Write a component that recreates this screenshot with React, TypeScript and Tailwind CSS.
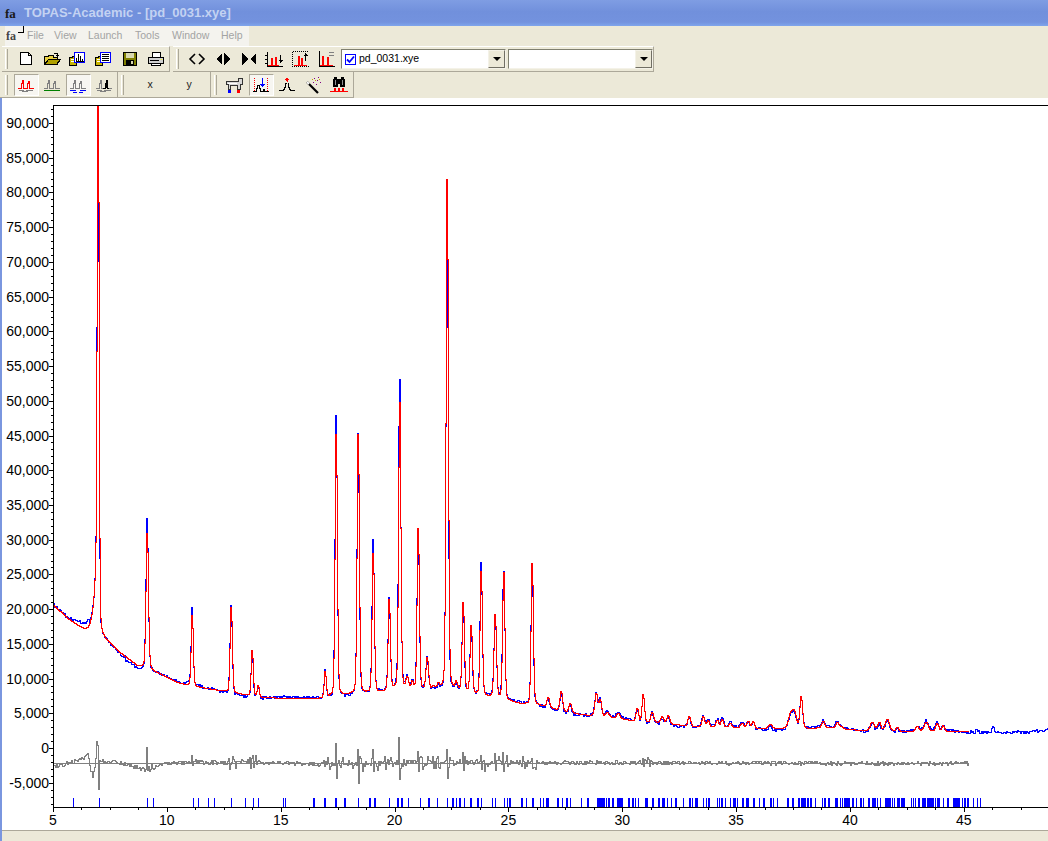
import type { ReactNode } from 'react';

// [x, red top, blue top, width] in screen pixels
const PEAKS: [number, number, number, number][] = [
  [98, 60, 65, 1], [147, 533, 518, 1.4], [192, 615, 610, 1.2], [231, 607, 604, 1.3], [252, 650, 648, 1.2],
  [258, 685, 686, 1.2], [325, 672, 670, 1.2], [336, 434, 414, 1.3], [358, 434, 434, 1.3], [373, 553, 539, 1.3],
  [389, 600, 600, 1.3], [399.5, 403, 380, 1.3], [407, 678, 678, 1.5], [412, 682, 682, 1.2], [418, 529, 530, 1.3],
  [427, 658, 658, 1.5], [433, 686, 686, 1.2], [438, 684, 684, 1.2], [447, 179, 221, 1.3], [456, 683, 683, 1.2],
  [463, 603, 603, 1.3], [471, 626, 626, 1.3], [481, 572, 564, 1.3], [495, 615, 616, 1.4], [503.5, 572, 572, 1.3],
  [532, 563, 564, 1.3], [548, 697, 697, 1.5], [561, 691, 691, 1.5], [570, 703, 703, 1.5], [596, 693, 693, 1.6],
  [600, 700, 700, 1.6], [607, 712, 712, 2], [618, 713, 713, 2], [637, 708, 708, 1.5], [643, 694, 694, 1.4],
  [652, 712, 712, 1.6], [662, 716, 716, 1.6], [668, 715, 715, 1.6], [689, 716, 716, 1.6], [703, 716, 716, 1.6],
  [708, 720, 720, 1.5], [717, 720, 720, 1.6], [722, 719, 719, 1.6], [730, 723, 723, 1.8], [742, 723, 723, 2],
  [748, 721, 721, 1.6], [753, 721, 721, 1.6], [770, 724, 724, 2], [790, 716, 716, 2.5], [794, 712, 712, 2.5],
  [801, 697, 697, 1.6], [823, 721, 721, 1.8], [837, 722, 722, 1.8], [841, 726, 726, 1.5], [872, 722, 722, 2.5],
  [879, 722, 722, 1.8], [887, 719, 719, 2.5], [897, 727, 727, 1.6], [917, 726, 726, 2], [926, 722, 722, 2.5],
  [937, 723, 723, 1.8], [943, 725, 725, 1.6], [977, 728, 728, 1.6], [993, 725, 725, 1.5], [1018, 730, 730, 2],
];

const BASE: [number, number][] = [
  [53, 604], [68, 618], [88, 632], [101, 635], [120, 652], [137, 665], [150, 669], [180, 683], [195, 686],
  [230, 692], [260, 697], [290, 698], [320, 698], [340, 695], [360, 693], [380, 692], [400, 688], [420, 690],
  [445, 688], [460, 690], [480, 695], [500, 698], [520, 703], [540, 705], [560, 710], [580, 714], [600, 716],
  [620, 718], [640, 722], [660, 722], [690, 726], [760, 728], [810, 728], [830, 727], [860, 730], [900, 731],
  [968, 731], [1000, 731], [1020, 733], [1048, 731],
];

const DIFF_BASE: [number, number][] = [
  [53, 767], [70, 762], [85, 757], [88, 754], [91, 770], [93, 775], [96, 760], [102, 761], [120, 762], [130, 765],
  [140, 767], [145, 770], [150, 767], [170, 763], [190, 762], [230, 762], [240, 760], [260, 762], [300, 763],
  [320, 764], [400, 762], [969, 763],
];

const SPIKES: [number, number, number][] = [
  [97, 741, 781], [98, 745, 789], [147, 747, 770], [192, 755, 765], [229, 758, 769], [250, 757, 768], [324, 760, 766],
  [336, 743, 778], [358, 749, 783], [373, 749, 771], [385, 756, 769], [399, 737, 779], [418, 751, 771], [433, 756, 768],
  [447, 749, 778], [463, 752, 770], [481, 755, 769], [495, 753, 770], [503, 752, 771], [532, 758, 768], [643, 758, 766],
];

// tick offsets as read from the crops, grouped by their left origin
const TICKS_A = [73, 99, 147, 153, 193, 198, 208, 214, 231, 245, 253, 258, 283, 285, 313, 314, 324, 335, 336, 344];
const TICKS_B = [
  113, 147, 162, 207, 232, 242, 264, 299, 325, 352, 382, 395, 408, 418, 433, 450, 470, 475, 482, 515, 525, 553, 560,
  568, 604, 618, 635, 660, 668, 678, 685, 710, 725, 738, 750, 783, 800, 830, 835, 840, 845, 850, 858, 865, 875, 880,
  890, 895, 900, 905, 925, 935, 945, 955, 975, 980, 995, 1015, 1030,
];
const TICKS_C = [
  7, 22, 32, 44, 70, 88, 95, 105, 112, 130, 137, 145, 170, 178, 183, 195, 210, 218, 225, 232, 245, 258, 262, 278, 298,
  310, 330, 340, 352, 380, 385, 395, 415, 418, 422, 426, 430, 435, 440, 450, 465, 485, 492, 505, 525, 532, 540, 545,
  552, 558, 565, 575, 588, 600, 608, 625, 635, 642, 652, 660, 675, 680, 685, 690, 695, 702, 710, 718, 722, 726, 730,
  752, 760, 765, 775, 785, 790, 795, 800, 806, 810, 815, 820, 825, 830, 835, 850, 862, 880, 885, 892, 898, 905, 912,
  922, 938, 950, 960,
];
const TICKS = [
  ...TICKS_A,
  ...TICKS_B.map((t) => Math.round(320 + t / 3)),
  ...TICKS_C.map((t) => Math.round(660 + t / 3)),
];

function interp(table: [number, number][], x: number) {
  for (let i = 1; i < table.length; i++) {
    if (x <= table[i][0]) {
      const [x0, y0] = table[i - 1];
      const [x1, y1] = table[i];
      return y0 + ((y1 - y0) * (x - x0)) / (x1 - x0);
    }
  }
  return table[table.length - 1][1];
}

function rng(seed: number) {
  let s = seed;
  return () => {
    s = (s * 1664525 + 1013904223) % 4294967296;
    return s / 4294967296;
  };
}

const profile = (d: number, w: number) => {
  const r = (d / w) * (d / w);
  return 0.82 * Math.exp(-0.693 * r) + 0.18 / (1 + r);
};

function curve(which: 'red' | 'blue', end: number) {
  const noise = rng(which === 'red' ? 7 : 19);
  let d = '';
  for (let x = 53; x <= end; x++) {
    let y = interp(BASE, x);
    if (x < 98) y -= 120 * Math.exp(-(98 - x) / 3);
    if (which === 'blue') {
      y += (noise() - 0.5) * 3 + 1.4 * Math.sin(x / 17);
      if (x > 70 && x < 90) y -= ((x - 70) / 20) * 6;
      if (x > 125 && x < 145) y += 1.5;
    }
    for (const [px, red, blue, w] of PEAKS) {
      if (Math.abs(x - px) > 24) continue;
      const x0 = which === 'red' ? px + 0.3 : px + 0.2;
      const top = which === 'red' ? red : blue;
      const h = interp(BASE, px) - top;
      y -= (h * profile(x - x0, w)) / profile(Math.round(x0) - x0, w);
    }
    y = Math.round(Math.max(106, y));
    d += x === 53 ? `M52.5 ${y}` : `H${x - 0.5}V${y}`;
  }
  return d;
}

function diffCurve() {
  const noise = rng(31);
  let d = '';
  let sinceSpike = 99;
  for (let x = 53; x <= 969; x++) {
    let y = interp(DIFF_BASE, x) + (noise() - 0.5) * 4;
    if (x > 320 && x < 540 && noise() > 0.8) y += (noise() - 0.5) * 12;
    if (sinceSpike < 6 && x > 120) y += (noise() - 0.5) * 12;
    sinceSpike++;
    for (const [sx, up, down] of SPIKES) {
      if (x === sx) y = up;
      if (x === sx + 1) {
        y = down;
        sinceSpike = 0;
      }
    }
    y = Math.round(y);
    d += x === 53 ? `M52.5 ${y}` : `H${x - 0.5}V${y}`;
  }
  return d;
}

function tickPath() {
  const noise = rng(5);
  return TICKS.map((x) => {
    const wide = x > 300 && noise() < 0.4;
    return `M${x + 0.5} 798V807${wide ? `M${x + 1.5} 798V807` : ''}`;
  }).join('');
}

const yLabels = [90, 85, 80, 75, 70, 65, 60, 55, 50, 45, 40, 35, 30, 25, 20, 15, 10, 5];
const yFor = (v: number) => 748 - v * 6.944;

function Chart() {
  const yTicks: number[] = [];
  for (let v = -8; v <= 92; v++) yTicks.push(v);
  const xTicks: number[] = [];
  for (let i = 0; 53 + i * 28.46 <= 1048; i++) xTicks.push(i);

  return (
    <svg viewBox="2 98 1046 732" className="block h-[732px] w-[1046px]">
      <path d={curve('blue', 1048)} fill="none" stroke="#0000ff" strokeWidth="1" shapeRendering="crispEdges" />
      <path d={curve('red', 969)} fill="none" stroke="#ff0000" strokeWidth="1" shapeRendering="crispEdges" />
      <path d="M53 763.5H969" stroke="#808080" strokeWidth="1" shapeRendering="crispEdges" />
      <path d={diffCurve()} fill="none" stroke="#808080" strokeWidth="1" shapeRendering="crispEdges" />
      <path d={tickPath()} stroke="#0000ff" strokeWidth="1" shapeRendering="crispEdges" />
      <path d="M53.5 105V808M53 105.5H1048M53 807.5H1048" stroke="#000" strokeWidth="1" shapeRendering="crispEdges" />
      {yTicks.map((v) => (
        <path
          key={v}
          d={`M${v % 5 === 0 ? 49 : 51} ${Math.round(yFor(v)) + 0.5}H53`}
          stroke="#000"
          strokeWidth="1"
          shapeRendering="crispEdges"
        />
      ))}
      {xTicks.map((i) => (
        <path
          key={i}
          d={`M${Math.round(53 + i * 28.46) + 0.5} 807V${i % 4 === 0 ? 812 : 810}`}
          stroke="#000"
          strokeWidth="1"
          shapeRendering="crispEdges"
        />
      ))}
      <g className="text-[14px]" fill="#000">
        {yLabels.map((v) => (
          <text key={v} x="49" y={yFor(v) + 5} textAnchor="end">
            {`${v},000`}
          </text>
        ))}
        <text x="49" y={753} textAnchor="end">0</text>
        <text x="49" y={788} textAnchor="end">-5,000</text>
        {[5, 10, 15, 20, 25, 30, 35, 40, 45].map((v, i) => (
          <text key={v} x={53 + i * 113.85} y={825} textAnchor="middle">
            {v}
          </text>
        ))}
      </g>
    </svg>
  );
}

function Ic({ children }: { children: ReactNode }) {
  return (
    <svg viewBox="0 0 20 20" className="h-5 w-5" shapeRendering="crispEdges" fill="none">
      {children}
    </svg>
  );
}

const TwoPeaks = ({ c }: { c: string }) => (
  <path d="M2 13.5H5.5V8.5H6.5V5.5H7.5V13.5H8.5V13.5H11.5V8.5H12.5V6.5H13.5V13.5H18" stroke={c} />
);

const Squiggle = () => <path d="M3 15.5H8M6 16.5H12M10 15.5H17" stroke="#808080" />;

const Folder = () => (
  <>
    <path d="M1.5 8.5H4.5V7.5H8.5V16.5H1.5Z" fill="#c8b400" stroke="#000" />
    <path d="M3 10.5H8M3 12.5H8" stroke="#fff" />
  </>
);

const ICONS: Record<string, ReactNode> = {
  doc: <path d="M4.5 3.5H12.5L15.5 6.5V15.5H4.5ZM12.5 3.5V6.5H15.5" fill="#fff" stroke="#000" />,
  open: (
    <>
      <path d="M2.5 7.5H6.5V6.5H11.5V8.5H15.5V15.5H2.5Z" fill="#e8d040" stroke="#000" />
      <path d="M2.5 15.5L6.5 10.5H18.5L14.5 15.5Z" fill="#b0a000" stroke="#000" />
      <path d="M12 4.5H15.5V8M17 6.5H14" stroke="#000" />
    </>
  ),
  chartFolder: (
    <>
      <Folder />
      <rect x="6.5" y="3.5" width="10" height="10" fill="#fff" stroke="#0000ff" />
      <path d="M8.5 12V9M10.5 12V5M12.5 12V7M14.5 12V10M7.5 12.5H16" stroke="#000" />
    </>
  ),
  listFolder: (
    <>
      <Folder />
      <rect x="6.5" y="3.5" width="10" height="10" fill="#fff" stroke="#0000ff" />
      <path d="M8 5.5H15M8 7.5H15M8 9.5H15M8 11.5H15" stroke="#000" />
    </>
  ),
  save: (
    <>
      <rect x="3.5" y="3.5" width="13" height="13" fill="#808000" stroke="#000" />
      <rect x="6" y="4" width="8" height="5" fill="#d8d8b0" />
      <rect x="6" y="11" width="8" height="5" fill="#000" />
      <rect x="11" y="12" width="2" height="3" fill="#d8d8b0" />
    </>
  ),
  print: (
    <>
      <path d="M6.5 3.5H14.5V8.5H6.5Z" fill="#fff" stroke="#000" />
      <path d="M2.5 8.5H17.5V14.5H2.5Z" fill="#d0d0d0" stroke="#000" />
      <path d="M5.5 14.5H14.5V16.5H5.5Z" fill="#fff" stroke="#000" />
      <path d="M4 11.5H13" stroke="#000" />
      <path d="M15 10.5H16" stroke="#ffff00" />
    </>
  ),
  chev: <path d="M8 5L3 10L8 15M12 5L17 10L12 15" stroke="#000" strokeWidth="1.6" shapeRendering="auto" />,
  apart: <path d="M9 4V16L3 10ZM11 4V16L17 10Z" fill="#000" />,
  together: <path d="M3 4V16L9 10ZM17 4V16L11 10Z" fill="#000" />,
  down: (
    <>
      <path d="M2.5 3V17.5H18M0 6.5H2M0 10.5H2M0 14.5H2" stroke="#000" />
      <path d="M3 16.5H6.5V9.5H7.5V16.5H10.5V8.5H11.5V16.5H14" stroke="#ff0000" />
      <path d="M15.5 6V14M13.5 11.5H17.5M14.5 12.5H16.5" stroke="#000" />
    </>
  ),
  up: (
    <>
      <path d="M1.5 2.5H18M1.5 3V17.5H18" stroke="#000" strokeDasharray="1 1" />
      <path d="M3 16.5H7.5V7.5H8.5V16.5H10.5V9.5H11.5V16.5H16" stroke="#ff0000" />
      <path d="M14.5 4V12M12.5 6.5H16.5M13.5 5.5H15.5" stroke="#000" />
    </>
  ),
  list: (
    <>
      <path d="M2.5 2V17.5H18" stroke="#000" />
      <path d="M3 16.5H5.5V7.5H6.5V16.5H10.5V8.5H11.5V16.5H16" stroke="#ff0000" />
      <path d="M12 3.5H17M12 6.5H17" stroke="#808080" />
    </>
  ),
  redPeaks: (
    <>
      <TwoPeaks c="#ff0000" />
      <Squiggle />
    </>
  ),
  greenPeaks: (
    <>
      <TwoPeaks c="#808080" />
      <path d="M2 15.5H18" stroke="#008000" />
    </>
  ),
  bluePeaks: (
    <>
      <TwoPeaks c="#808080" />
      <path d="M2 15.5H8M12 15.5H18M5 17.5H9M11 17.5H15" stroke="#0000ff" />
    </>
  ),
  blackPeak: (
    <>
      <TwoPeaks c="#808080" />
      <path d="M9 13.5H11.5V8.5H12.5V5.5H13.5V13.5H15" stroke="#000" />
      <rect x="12" y="8" width="2" height="5" fill="#000" />
      <Squiggle />
    </>
  ),
  dog: (
    <>
      <path d="M1.5 6.5H13.5V3.5H17.5V9.5H15.5V14.5H12.5V10.5H5.5V14.5H3.5V9.5H1.5Z" fill="#d8d8d8" stroke="#333" />
      <path d="M3 8.5H12" stroke="#fff" />
      <rect x="3" y="15" width="3" height="3" fill="#0000ff" />
      <rect x="12" y="15" width="3" height="3" fill="#ff0000" />
    </>
  ),
  fit: (
    <>
      <path d="M3.5 3V17M16.5 3V17" stroke="#ff0000" strokeDasharray="1 1" />
      <path d="M2 16.5H5.5V13.5H6.5V10.5H8.5V13.5H9.5V16.5H12.5V14.5H13.5V16.5H18" stroke="#000" />
      <path d="M11.5 3V12M9 9.5H14M10 10.5H13M11 11.5H12" stroke="#0000ff" />
    </>
  ),
  pick: (
    <>
      <path d="M10 3V7M8 4.5H12M9 5.5H11" stroke="#ff0000" />
      <rect x="9" y="3" width="2" height="3" fill="#ff0000" />
      <path d="M2 15.5H6.5V14.5H7.5V12.5H8.5V8.5H9.5M10.5 8.5H11.5V12.5H12.5V14.5H13.5V15.5H18" stroke="#000" />
    </>
  ),
  wand: (
    <>
      <path d="M4 7L15 18" stroke="#000" strokeWidth="2.2" shapeRendering="auto" />
      <path d="M4 7L6 9" stroke="#fff" strokeWidth="2" shapeRendering="auto" />
      <path d="M11 3.5H12M14 5.5H15M10 7.5H11M15 2.5H16M17 7.5H18M13 9.5H14" stroke="#800080" />
      <path d="M12 5.5H13M16 4.5H17M9 4.5H10" stroke="#c0a000" />
    </>
  ),
  bino: (
    <>
      <path d="M5 2H8V4H12V2H15V4H16V12H11V9H9V12H4V4H5Z" fill="#000" />
      <path d="M6.5 5V10M13.5 5V10" stroke="#909090" />
      <path d="M1 16.5H5.5V13.5H6.5V16.5H9.5V13.5H10.5V16.5H13.5V13.5H14.5V16.5H19" stroke="#ff0000" />
    </>
  ),
};

function Btn({ icon, on }: { icon: string; on?: boolean }) {
  return (
    <div className="flex h-[22px] w-[26px] shrink-0 items-center justify-center">
      <div
        className={
          on
            ? 'flex h-[22px] w-[25px] items-center justify-center border border-b-white border-l-[#aca899] border-r-white border-t-[#aca899] bg-[#f7f6f1]'
            : 'flex h-[22px] w-[25px] items-center justify-center'
        }
      >
        <Ic>{ICONS[icon]}</Ic>
      </div>
    </div>
  );
}

function Grip() {
  return <div className="ml-[3px] mr-[5px] h-[20px] w-[3px] shrink-0 border-l border-r border-l-white border-r-[#aca899] bg-[#ece9d8]" />;
}

function Combo({ wide, children }: { wide: string; children?: ReactNode }) {
  return (
    <div className={`${wide} flex h-[20px] shrink-0 items-center justify-between border border-b-[#f4f2e8] border-l-[#808070] border-r-[#f4f2e8] border-t-[#808070] bg-white`}>
      <div className="flex items-center pl-[3px]">{children}</div>
      <div className="flex h-[18px] w-[17px] items-center justify-center border border-b-[#716f64] border-l-[#f4f2e8] border-r-[#716f64] border-t-[#f4f2e8] bg-[#ece9d8]">
        <div className="h-0 w-0 border-x-[4px] border-t-[4px] border-x-transparent border-t-black" />
      </div>
    </div>
  );
}

export default function App() {
  return (
    <div className="flex h-[841px] w-[1048px] flex-col overflow-hidden bg-[#ece9d8] font-['Liberation_Sans',sans-serif]">
      {/* Title bar */}
      <div className="flex h-[26px] shrink-0 items-center bg-[linear-gradient(180deg,#7f9de3_0%,#7190dc_45%,#7392de_85%,#7fa5ec_100%)] pl-[5px]">
        <span className="w-[19px] font-['Liberation_Serif',serif] text-[13px] font-bold leading-none text-[#1a1a1a]">fa</span>
        <span className="text-[13px] font-bold text-[#c3d2f2]">
          TOPAS-Academic - [pd_0031.xye]
        </span>
      </div>

      {/* Menu */}
      <div className="relative flex h-[20px] shrink-0">
        <div className="ml-[5px] flex w-[244px] items-center bg-[#f4f3ee] text-[10.5px] text-[#a3a3a3]">
          <span className="w-[16px] pl-[1px] font-['Liberation_Serif',serif] text-[12px] font-bold leading-none text-[#444444]">fa</span>
          <span className="ml-[6px] w-[27px]">File</span>
          <span className="w-[34px]">View</span>
          <span className="w-[47px]">Launch</span>
          <span className="w-[37px]">Tools</span>
          <span className="w-[49px]">Window</span>
          <span>Help</span>
        </div>
        <div className="absolute left-[18px] top-0 h-[7px] w-[6px] border-b border-r border-black" />
      </div>

      {/* Toolbar row 1 */}
      <div className="flex h-[26px] shrink-0">
        <div className="ml-[2px] flex w-[168px] items-center border-b border-r border-t border-b-[#aca899] border-r-[#aca899] border-t-white">
          <Grip />
          {['doc', 'open', 'chartFolder', 'listFolder', 'save', 'print'].map((i) => (
            <Btn key={i} icon={i} />
          ))}
        </div>
        <div className="ml-[3px] flex w-[481px] items-center border-b border-r border-t border-b-[#aca899] border-r-[#aca899] border-t-white">
          <Grip />
          {['chev', 'apart', 'together', 'down', 'up', 'list'].map((i) => (
            <Btn key={i} icon={i} />
          ))}
          <div className="w-[1px]" />
          <Combo wide="w-[165px]">
            <div className="flex h-[11px] w-[11px] items-center justify-center border border-[#0000ff] bg-white">
              <svg viewBox="0 0 9 9" className="h-[9px] w-[9px]" fill="none">
                <path d="M1 4.5L3.5 7L8 1.5" stroke="#0000ff" strokeWidth="1.8" />
              </svg>
            </div>
            <span className="ml-[3px] text-[10.5px] text-black">pd_0031.xye</span>
          </Combo>
          <div className="w-[2px]" />
          <Combo wide="w-[145px]" />
        </div>
      </div>

      {/* Toolbar row 2 */}
      <div className="flex h-[26px] shrink-0">
        <div className="flex w-[118px] items-center border-b border-r border-b-[#aca899] border-r-[#aca899] pl-[2px]">
          <Grip />
          <Btn icon="redPeaks" on />
          <Btn icon="greenPeaks" />
          <Btn icon="bluePeaks" on />
          <Btn icon="blackPeak" />
        </div>
        <div className="flex w-[93px] items-center border-b border-r border-b-[#aca899] border-r-[#aca899]">
          <Grip />
          <span className="ml-[1px] w-[40px] text-center text-[10.5px] text-[#222222]">x</span>
          <span className="w-[38px] text-center text-[10.5px] text-[#222222]">y</span>
        </div>
        <div className="flex w-[143px] items-center border-b border-r border-b-[#aca899] border-r-[#aca899]">
          <Grip />
          <Btn icon="dog" />
          <Btn icon="fit" on />
          <Btn icon="pick" />
          <Btn icon="wand" />
          <Btn icon="bino" />
        </div>
      </div>

      {/* Plot area */}
      <div className="flex min-h-0 flex-1 flex-col border-l-2 border-[#7a96df]">
        <div className="shrink-0 bg-white">
          <Chart />
        </div>
        <div className="flex-1 border-t border-[#aca899] bg-[#ece9d8]" />
      </div>
    </div>
  );
}
